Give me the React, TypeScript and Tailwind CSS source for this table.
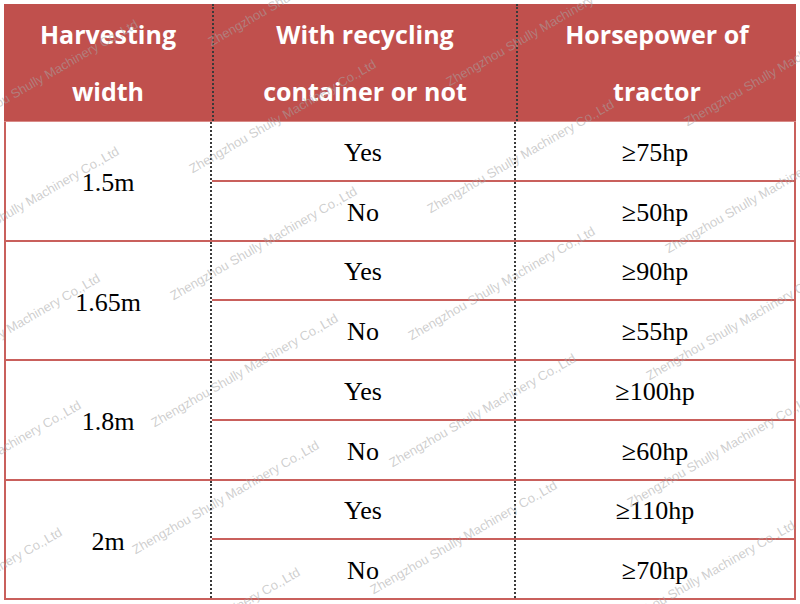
import React from 'react';

const groups = [
    { width: '1.5m', rows: [{ c: 'Yes', hp: '≥75hp' }, { c: 'No', hp: '≥50hp' }] },
    { width: '1.65m', rows: [{ c: 'Yes', hp: '≥90hp' }, { c: 'No', hp: '≥55hp' }] },
    { width: '1.8m', rows: [{ c: 'Yes', hp: '≥100hp' }, { c: 'No', hp: '≥60hp' }] },
    { width: '2m', rows: [{ c: 'Yes', hp: '≥110hp' }, { c: 'No', hp: '≥70hp' }] },
];

// watermark lattice, measured off the picture
const marks: { x: number; y: number }[] = [];
for (let i = -2; i <= 3; i++) {
    for (let j = -3; j <= 4; j++) {
        const x = 175 + 238 * i - 19 * j;
        const y = 303 + 40 * i + 127 * j;
        if (x > -240 && x < 800 && y > -5 && y < 720) marks.push({ x, y });
    }
}

export default function App() {
    return (
        <div className="relative w-[800px] h-[604px] overflow-hidden bg-white p-[4px]">
            <div className="w-[792px] h-[596px] flex flex-col border-x-2 border-b-2 border-[#c9605c] border-t-0">
                {/* Header */}
                <div className="h-[118px] flex bg-[#c0504d] text-white font-bold text-[25px] leading-[57px] text-center border-b border-[#d98a87] -mx-[2px]" style={{ fontFamily: '"Open Sans", "DejaVu Sans", sans-serif' }}>
                    <div className="w-[208px] flex items-center justify-center">
                        <div>Harvesting<br />width</div>
                    </div>
                    <div className="w-[304px] flex items-center justify-center border-l-2 border-dotted border-[#3a3a3a]">
                        <div>With recycling<br />container or not</div>
                    </div>
                    <div className="flex-1 flex items-center justify-center border-l-2 border-dotted border-[#3a3a3a]">
                        <div>Horsepower of<br />tractor</div>
                    </div>
                </div>

                {/* Body */}
                <div className="flex-1 flex flex-col text-[26px] text-black" style={{ fontFamily: '"Liberation Serif", "Times New Roman", serif' }}>
                    {groups.map((g, gi) => (
                        <div key={gi} className={`flex-1 flex ${gi > 0 ? 'border-t-2 border-[#c9605c]' : ''}`}>
                            <div className="w-[204px] flex items-center justify-center pt-[4px]">{g.width}</div>
                            <div className="flex-1 flex flex-col border-l-2 border-dotted border-[#3a3a3a]">
                                {g.rows.map((r, ri) => (
                                    <div key={ri} className={`flex-1 flex pt-[3px] ${ri > 0 ? 'border-t-2 border-[#c9605c]' : ''}`}>
                                        <div className="w-[302px] flex items-center justify-center">{r.c}</div>
                                        <div className="flex-1 flex items-center justify-center border-l-2 border-dotted border-[#3a3a3a] -mt-[3px] pt-[3px]">{r.hp}</div>
                                    </div>
                                ))}
                            </div>
                        </div>
                    ))}
                </div>
            </div>

            {/* Watermarks */}
            {marks.map((m, k) => (
                <span
                    key={k}
                    className="absolute pointer-events-none whitespace-nowrap text-[13px] leading-[14px] text-[rgba(165,165,165,0.55)] origin-bottom-left rotate-[-30deg]"
                    style={{ left: m.x, top: m.y - 14, fontFamily: '"Liberation Sans", Arial, sans-serif' }}
                >
                    Zhengzhou Shully Machinery Co.,Ltd
                </span>
            ))}
        </div>
    );
}
